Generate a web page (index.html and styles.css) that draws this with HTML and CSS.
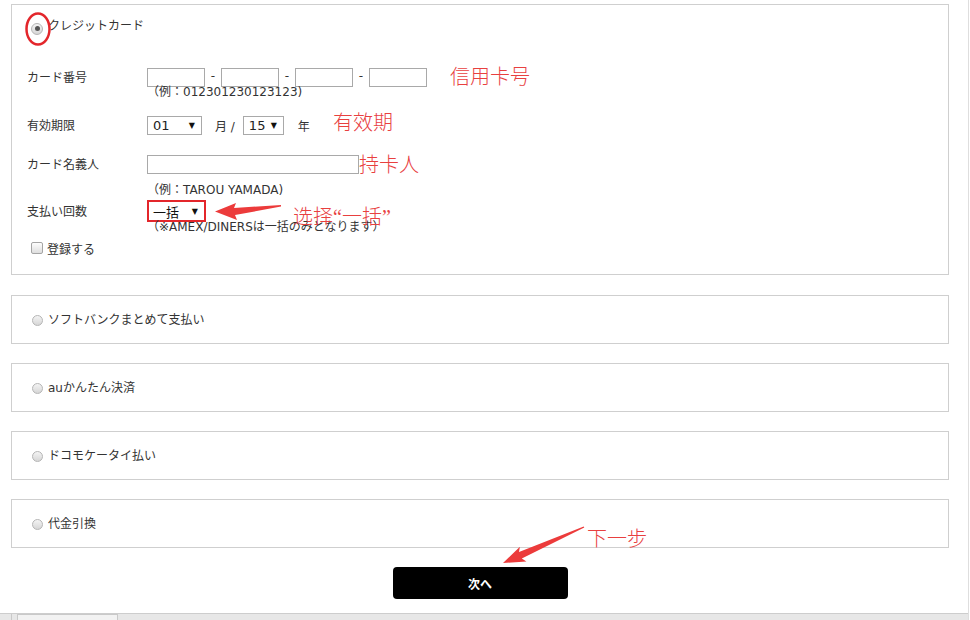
FILE: index.html
```html
<!DOCTYPE html>
<html lang="ja">
<head>
<meta charset="utf-8">
<title>お支払い方法</title>
<link rel="stylesheet" href="styles.css">
</head>
<body>
<div class="page">
  <div class="content">
    <section class="box box-card">
      <div class="head"><span class="radio checked"></span><span class="opt-label">クレジットカード</span></div>

      <div class="row row-num">
        <div class="lbl">カード番号</div>
        <div class="fields">
          <span class="inp w58"></span><span class="dash">-</span>
          <span class="inp w58"></span><span class="dash">-</span>
          <span class="inp w58"></span><span class="dash">-</span>
          <span class="inp w58"></span>
        </div>
      </div>
      <div class="note note-num">（例：012301230123123)</div>

      <div class="row row-exp">
        <div class="lbl">有効期限</div>
        <div class="fields">
          <span class="sel sel-month"><span>01</span><span class="arr">▼</span></span>
          <span class="unit unit-month">月 /</span>
          <span class="sel sel-year"><span>15</span><span class="arr">▼</span></span>
          <span class="unit unit-year">年</span>
        </div>
      </div>

      <div class="row row-name">
        <div class="lbl">カード名義人</div>
        <div class="fields"><span class="inp w211"></span></div>
      </div>
      <div class="note note-name">（例：TAROU YAMADA)</div>

      <div class="row row-pay">
        <div class="lbl">支払い回数</div>
        <div class="fields">
          <span class="sel sel-pay"><span>一括</span><span class="arr">▼</span></span>
        </div>
      </div>
      <div class="note note-pay">（※AMEX/DINERSは一括のみとなります）</div>

      <div class="check-row"><span class="checkbox"></span><span>登録する</span></div>
    </section>

    <section class="box box-opt"><span class="radio"></span><span class="opt-label">ソフトバンクまとめて支払い</span></section>
    <section class="box box-opt"><span class="radio"></span><span class="opt-label">auかんたん決済</span></section>
    <section class="box box-opt"><span class="radio"></span><span class="opt-label">ドコモケータイ払い</span></section>
    <section class="box box-opt"><span class="radio"></span><span class="opt-label">代金引換</span></section>

    <div class="actions"><button class="next" type="button">次へ</button></div>
  </div>

  <div class="hscroll"><span class="hs-btn"></span><span class="hs-thumb"></span></div>

  <svg class="annot" width="970" height="620" viewBox="0 0 970 620" xmlns="http://www.w3.org/2000/svg">
    <ellipse cx="38" cy="29" rx="11.5" ry="15.5" fill="none" stroke="#e3262b" stroke-width="2.5"/>
    <polygon fill="#ec3b3b" points="215,211.5 236,203 234,208 281,205 281,206.6 235,215 237,220"/>
    <polygon fill="#ec3b3b" points="503,563 519.9,546.8 519,552.1 583.7,526.4 584.3,527.6 521.8,558.5 526.4,561.4"/>
  </svg>

  <div class="red red-card">信用卡号</div>
  <div class="red red-exp">有效期</div>
  <div class="red red-name">持卡人</div>
  <div class="red red-pay">选择“一括”</div>
  <div class="red red-next">下一步</div>
</div>
</body>
</html>
```

FILE: styles.css
```css
* { box-sizing: border-box; }

html, body {
  margin: 0;
  padding: 0;
  background: #fff;
}

body {
  font-family: "DejaVu Sans", "Noto Sans CJK JP", sans-serif;
  font-size: 12px;
  color: #333;
  overflow: hidden;
}

.page {
  position: relative;
  width: 969px;
  height: 620px;
  border-right: 1px solid #dedede;
}

.content {
  padding-top: 4px;
  padding-left: 11px;
  height: 613px;
}

.box {
  width: 938px;
  border: 1px solid #cfcfcf;
  background: #fff;
}

.box-card {
  margin-bottom: 20px;
  padding-bottom: 20px;
}

.box-opt {
  height: 49px;
  margin-bottom: 19px;
  display: flex;
  align-items: center;
  padding-left: 20px;
}

.opt-label {
  margin-left: 5px;
  line-height: 14px;
}

.head {
  height: 44px;
  display: flex;
  align-items: center;
  padding-left: 19px;
}

.head .opt-label { margin-top: -2px; }

/* radio buttons */
.radio {
  width: 11px;
  height: 11px;
  border-radius: 50%;
  border: 1px solid #b5b5b5;
  background: linear-gradient(#f4f4f4, #d6d6d6);
  display: inline-flex;
  align-items: center;
  justify-content: center;
  flex: none;
  margin-top: 1px;
}

.head .radio {
  width: 12px;
  height: 12px;
  margin-top: 3px;
}

.radio.checked::after {
  content: "";
  width: 5px;
  height: 5px;
  border-radius: 50%;
  background: #555;
}

/* form rows */
.row {
  display: flex;
  align-items: center;
  padding-left: 15px;
}

.lbl {
  width: 120px;
  flex: none;
  margin-top: -2px;
}

.fields {
  display: flex;
  align-items: center;
}

.row-num { height: 19px; margin-top: 19px; }
.row-exp { height: 19px; margin-top: 17px; }
.row-name { height: 19px; margin-top: 20px; }
.row-pay { height: 22px; margin-top: 3px; }

.note {
  padding-left: 135px;
  line-height: 14px;
  height: 14px;
}

.note-num { margin-top: -2px; }
.note-name { margin-top: 9px; }
.note-pay { margin-top: -2px; }

.inp {
  display: inline-block;
  height: 19px;
  border: 1px solid #a9a9a9;
  background: #fff;
}

.w58 { width: 58px; }
.w211 { width: 212px; }

.dash {
  width: 16px;
  text-align: center;
  line-height: 14px;
  margin-top: -4px;
}

.sel {
  display: inline-flex;
  align-items: center;
  justify-content: space-between;
  height: 19px;
  border: 1px solid #a9a9a9;
  background: #fff;
  padding: 0 6px 0 5px;
  color: #222;
  font-size: 13px;
}

.sel .arr {
  font-size: 8px;
  color: #111;
}

.sel-month { width: 55px; }
.sel-year { width: 41px; }

.sel-pay {
  width: 59px;
  height: 22px;
  border: 2px solid #e3262b;
  padding: 0 6px 0 4px;
  font-size: 13px;
  color: #111;
}

.unit-month { margin: 0 8px 0 13px; }
.unit-year { margin-left: 14px; }

.check-row {
  display: flex;
  align-items: center;
  height: 12px;
  margin-top: 8px;
  padding-left: 19px;
}

.checkbox {
  width: 12px;
  height: 12px;
  border: 1px solid #a5a5a5;
  border-radius: 2px;
  background: linear-gradient(#fdfdfd, #dedede);
  margin-right: 4px;
  flex: none;
}

/* next button */
.actions {
  display: flex;
  justify-content: center;
  width: 938px;
}

.next {
  width: 175px;
  height: 32px;
  border: none;
  border-radius: 4px;
  background: #000;
  color: #fff;
  font-family: "DejaVu Sans", "Noto Sans CJK JP", sans-serif;
  font-size: 12px;
  font-weight: bold;
  padding: 0;
}

/* bottom scroll band */
.hscroll {
  position: relative;
  height: 7px;
  background: #e7e7e7;
  border-top: 1px solid #cdcdcd;
  display: flex;
  gap: 5px;
}

.hs-btn {
  width: 12px;
  height: 6px;
  border-right: 1px solid #c9c9c9;
}

.hs-thumb {
  width: 101px;
  height: 6px;
  border: 1px solid #c9c9c9;
  border-bottom: none;
  background: #f2f2f2;
}

/* annotation overlay */
.annot {
  position: absolute;
  left: 0;
  top: 0;
  pointer-events: none;
}

.red {
  position: absolute;
  font-family: "Liberation Serif", "Noto Sans CJK SC", sans-serif;
  font-weight: 300;
  font-size: 20px;
  line-height: 20px;
  color: #e8403f;
  white-space: nowrap;
}

.red-card { left: 450px; top: 67px; }
.red-exp { left: 333px; top: 113px; }
.red-name { left: 359px; top: 155px; }
.red-pay { left: 293px; top: 207px; font-style: normal; }
.red-next { left: 587px; top: 529px; }
```
